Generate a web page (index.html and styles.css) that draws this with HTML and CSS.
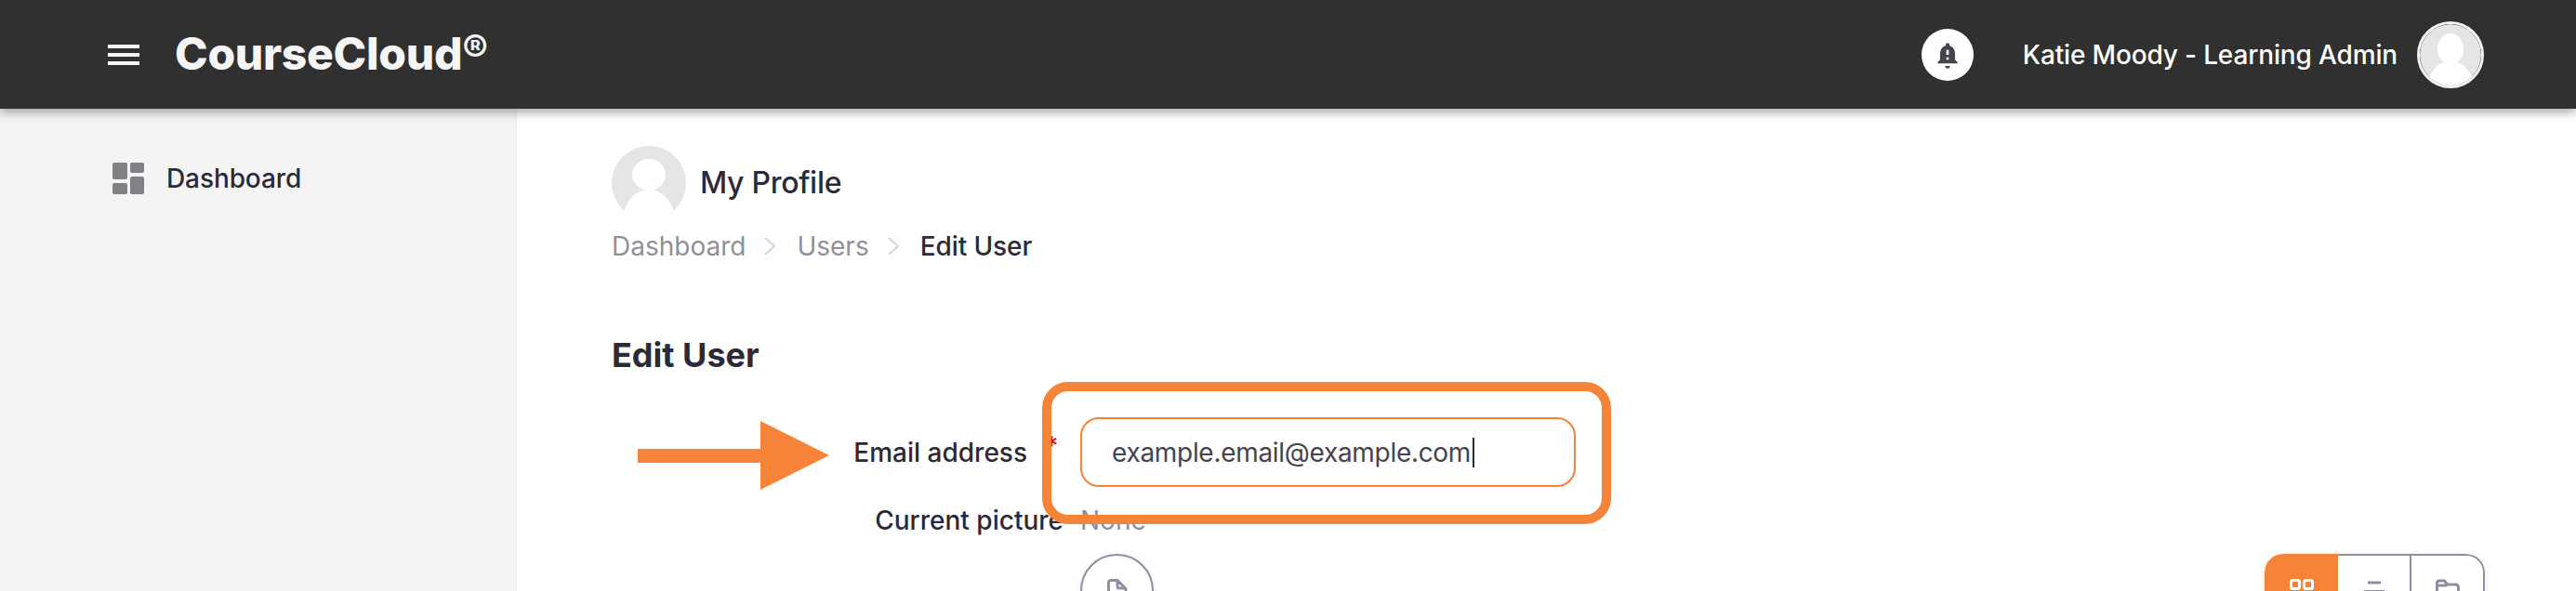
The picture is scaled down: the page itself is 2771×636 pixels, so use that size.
FILE: index.html
```html
<!DOCTYPE html>
<html lang="en">
<head>
<meta charset="UTF-8" />
<title>CourseCloud - Edit User</title>
<link rel="stylesheet" href="styles.css">
</head>
<body>

  <!-- Top bar -->
  <header class="topbar">
    <div class="hamburger"><span></span><span></span><span></span></div>
    <div class="logo">CourseCloud<sup>®</sup></div>
    <div class="topbar-right">
      <div class="bell">
        <svg viewBox="0 0 24 24" width="32" height="32"><path fill="#45434f" d="M12 23c1.100 0 2-.9 2-2h-4c0 1.100.9 2 2 2zm6-7v-5c0-3.070-1.640-5.640-4.500-6.320V4c0-.83-.67-1.500-1.500-1.500s-1.500.67-1.500 1.500v.68C7.630 5.360 6 7.920 6 11v5l-2 2v1h16v-1l-2-2zm-5 0h-2v-2h2v2zm0-4h-2V8h2v4z"/></svg>
      </div>
      <div class="user-name">Katie Moody - Learning Admin</div>
      <svg class="user-avatar" viewBox="0 0 80 80"><circle cx="40" cy="40" r="40" fill="#e5e5e5"/><ellipse cx="40" cy="32" rx="17" ry="20" fill="#fff"/><ellipse cx="40" cy="80" rx="29" ry="32" fill="#fff"/></svg>
    </div>
  </header>

  <div class="layout">
    <!-- Sidebar -->
    <nav class="sidebar">
      <div class="nav-item">
        <svg class="nav-icon" viewBox="0 0 34 34">
          <rect x="0" y="0" width="16" height="18" rx="2"/>
          <rect x="19" y="0" width="15" height="11" rx="2"/>
          <rect x="0" y="22" width="16" height="12" rx="2"/>
          <rect x="19" y="15" width="15" height="19" rx="2"/>
        </svg>
        <span>Dashboard</span>
      </div>
    </nav>

    <!-- Main content -->
    <main class="content">
      <div class="page-title">
        <svg class="page-avatar" viewBox="0 0 80 80"><circle cx="40" cy="40" r="40" fill="#e5e5e5"/><ellipse cx="40" cy="31" rx="18" ry="17" fill="#fff"/><ellipse cx="40" cy="80" rx="28" ry="33" fill="#fff"/><rect x="0" y="70" width="80" height="10" fill="#fff"/></svg>
        <span class="page-name">My Profile</span>
      </div>

      <div class="breadcrumb">
        <span class="crumb">Dashboard</span>
        <svg class="chevron" viewBox="0 0 12 20"><path d="M1 1l10 9-10 9"/></svg>
        <span class="crumb">Users</span>
        <svg class="chevron" viewBox="0 0 12 20"><path d="M1 1l10 9-10 9"/></svg>
        <span class="crumb-current">Edit User</span>
      </div>

      <h1 class="section-title">Edit User</h1>

      <div class="form-grid">
        <div class="form-label"><span>Email address</span><span class="required">*</span></div>
        <div class="text-field">example.email@example.com<span class="caret"></span></div>

        <div class="form-label">Current picture</div>
        <div class="static-value">None</div>

        <div></div>
        <div class="file-row">
          <div class="file-btn">
            <svg viewBox="0 0 22 28" width="22" height="28"><path d="M4 1.500h7l9 9V24a2.500 2.500 0 0 1-2.500 2.500H4A2.500 2.500 0 0 1 1.500 24V4A2.500 2.500 0 0 1 4 1.500zM11 1.500V8a2 2 0 0 0 2 2h7"/></svg>
          </div>
          <div class="view-toggle">
            <div class="view-btn active">
              <svg viewBox="0 0 26 26" width="26" height="26"><rect x="1.500" y="1.500" width="9" height="9" rx="2"/><rect x="15.500" y="1.500" width="9" height="9" rx="2"/><rect x="1.500" y="15.500" width="9" height="9" rx="2"/><rect x="15.500" y="15.500" width="9" height="9" rx="2"/></svg>
            </div>
            <div class="view-btn">
              <svg viewBox="0 0 26 26" width="26" height="26"><path d="M6 4h14M2 13.500h22M6 23h14"/></svg>
            </div>
            <div class="view-btn">
              <svg viewBox="0 0 26 26" width="26" height="26"><path d="M1.500 22V4a2 2 0 0 1 2-2h6l3 4h9a3 3 0 0 1 3 3v13a2 2 0 0 1-2 2H3.500a2 2 0 0 1-2-2zM1.500 7h11"/></svg>
            </div>
          </div>
        </div>
      </div>
    </main>
  </div>

  <!-- Annotations drawn over the screenshot -->
  <svg class="note-arrow" viewBox="0 0 206 74"><path d="M0 30h132V0l74 37-74 37V45H0z"/></svg>
  <div class="note-box"></div>

</body>
</html>
```

FILE: styles.css
```css
html, body {
  height: 100%;
  overflow: hidden;
}
body {
  margin: 0;
  font-family: Inter, 'Liberation Sans', sans-serif;
  color: #2a2a38;
  background: #fff;
}

/* Top bar */
.topbar {
  position: relative;
  z-index: 2;
  display: flex;
  align-items: center;
  height: 117px;
  padding: 0 99px 0 116px;
  background: #303030;
  box-shadow: 0 4px 10px rgba(0, 0, 0, 0.35);
}
.hamburger {
  display: flex;
  flex-direction: column;
  justify-content: space-between;
  width: 34px;
  height: 22px;
  margin-right: 38px;
}
.hamburger span {
  height: 4px;
  background: #f5f5f5;
}
.logo {
  margin-top: -3px;
  font-size: 48px;
  font-weight: 800;
  letter-spacing: -0.3px;
  color: #f5f5f5;
}
.logo sup {
  font-size: 42px;
  font-weight: 700;
  line-height: 0;
  vertical-align: 7px;
}
.topbar-right {
  display: flex;
  align-items: center;
  margin-left: auto;
}
.bell {
  display: flex;
  align-items: center;
  justify-content: center;
  width: 56px;
  height: 56px;
  margin-right: 53px;
  border-radius: 50%;
  background: #fff;
}
.user-name {
  margin-right: 21px;
  font-size: 28px;
  font-weight: 500;
  letter-spacing: -0.15px;
  color: #fff;
}
.user-avatar {
  width: 66px;
  height: 66px;
  border: 3px solid #f2f2f2;
  border-radius: 50%;
}

/* Page layout */
.layout {
  display: flex;
  height: 519px;
  overflow: hidden;
}
.sidebar {
  width: 556px;
  padding: 58px 0 0 121px;
  box-sizing: border-box;
  background: #f4f4f4;
  border-right: 1px solid #e9e9e9;
  flex-shrink: 0;
}
.nav-item {
  display: flex;
  align-items: center;
  gap: 24px;
  font-size: 28px;
  font-weight: 500;
  letter-spacing: -0.1px;
}
.nav-icon {
  width: 34px;
  height: 34px;
  fill: #808085;
}

/* Main content */
.content {
  flex: 1;
  padding: 40px 98px 0 102px;
}
.page-title {
  display: flex;
  align-items: center;
  gap: 15px;
  font-size: 32px;
  font-weight: 500;
  letter-spacing: -0.3px;
}
.page-name {
  margin-top: -2px;
}
.page-avatar {
  width: 80px;
  height: 80px;
}
.breadcrumb {
  display: flex;
  align-items: center;
  margin-top: 11px;
  font-size: 28px;
  line-height: 34px;
}
.crumb {
  color: #90909a;
}
.crumb-current {
  font-weight: 500;
  letter-spacing: -0.1px;
}
.chevron {
  width: 12px;
  height: 20px;
  margin: 0 23px 0 20px;
  fill: none;
  stroke: #d4d4dc;
  stroke-width: 2;
}
.section-title {
  margin: 78px 0 0;
  font-size: 36px;
  line-height: 44px;
  font-weight: 700;
}

/* Form */
.form-grid {
  display: grid;
  grid-template-columns: 486px 1fr;
  column-gap: 18px;
  row-gap: 18px;
  margin-top: 45px;
}
.form-label {
  display: flex;
  align-items: center;
  justify-content: flex-end;
  font-size: 28px;
  line-height: 36px;
  font-weight: 500;
}
.required {
  width: 13px;
  margin: 0 7px 0 19px;
  font-size: 28px;
  color: #f00;
  position: relative;
  top: -7px;
}
.text-field {
  display: flex;
  align-items: center;
  box-sizing: border-box;
  width: 533px;
  height: 75px;
  padding-left: 32px;
  border: 2px solid #f58338;
  border-radius: 20px;
  font-size: 28px;
  letter-spacing: -0.3px;
  color: #45434f;
}
.caret {
  width: 2px;
  height: 32px;
  margin-left: 2px;
  background: #2a2a38;
}
.static-value {
  font-size: 28px;
  line-height: 36px;
  color: #8d8ca0;
}
.file-row {
  display: flex;
  justify-content: space-between;
}
.file-btn {
  display: flex;
  justify-content: center;
  box-sizing: border-box;
  width: 79px;
  height: 79px;
  padding-top: 25px;
  border: 2px solid #8f8ea3;
  border-radius: 50%;
  box-shadow: 0 2px 6px rgba(0, 0, 0, 0.1);
}
.file-btn svg {
  fill: none;
  stroke: #8f8ea3;
  stroke-width: 3;
}
.view-toggle {
  display: flex;
  height: 79px;
  border-radius: 20px;
  overflow: hidden;
  box-shadow: 0 2px 6px rgba(0, 0, 0, 0.1);
}
.view-btn {
  display: flex;
  justify-content: center;
  box-sizing: border-box;
  width: 79px;
  padding-top: 25px;
  border: 2px solid #8f8ea3;
  border-left-width: 0;
}
.view-btn:first-child {
  border-left-width: 2px;
  border-radius: 20px 0 0 20px;
}
.view-btn:last-child {
  border-radius: 0 20px 20px 0;
}
.view-btn svg {
  fill: none;
  stroke: #8f8ea3;
  stroke-width: 3;
}
.view-btn.active {
  background: #f58338;
  border-color: #f58338;
}
.view-btn.active svg {
  stroke: #fff;
}

/* Orange annotations */
.note-arrow {
  position: absolute;
  left: 686px;
  top: 453px;
  width: 206px;
  height: 74px;
  fill: #f58338;
}
.note-box {
  position: absolute;
  left: 1121px;
  top: 411px;
  width: 612px;
  height: 153px;
  box-sizing: border-box;
  border: 10px solid #f58338;
  border-radius: 28px;
}
```
